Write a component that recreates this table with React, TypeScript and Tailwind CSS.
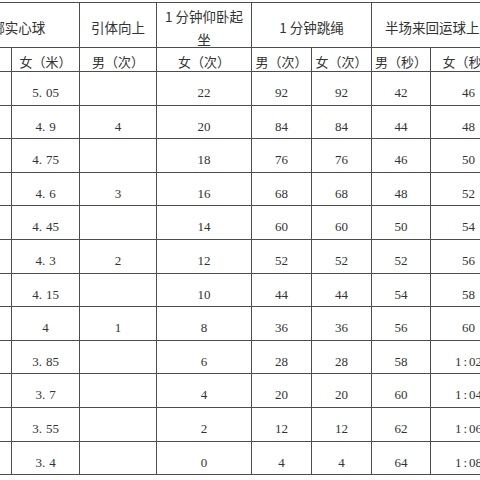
type Row = [string, string, string, string, string, string, string];

const rows: Row[] = [
  ['5.05', '', '22', '92', '92', '42', '46'],
  ['4.9', '4', '20', '84', '84', '44', '48'],
  ['4.75', '', '18', '76', '76', '46', '50'],
  ['4.6', '3', '16', '68', '68', '48', '52'],
  ['4.45', '', '14', '60', '60', '50', '54'],
  ['4.3', '2', '12', '52', '52', '52', '56'],
  ['4.15', '', '10', '44', '44', '54', '58'],
  ['4', '1', '8', '36', '36', '56', '60'],
  ['3.85', '', '6', '28', '28', '58', '1:02'],
  ['3.7', '', '4', '20', '20', '60', '1:04'],
  ['3.55', '', '2', '12', '12', '62', '1:06'],
  ['3.4', '', '0', '4', '4', '64', '1:08'],
];

const subHeads = ['男（米）', '女（米）', '男（次）', '女（次）', '男（次）', '女（次）', '男（秒）', '女（秒）'];

// SimSun-style wide punctuation in numbers
function Num({ v }: { v: string }) {
  const m = v.match(/^(\d+)([.:])(\d+)$/);
  if (!m) return <>{v}</>;
  return (
    <>
      {m[1]}
      <span className={m[2] === '.' ? 'mr-[4px]' : 'mx-[2px]'}>{m[2]}</span>
      {m[3]}
    </>
  );
}

const cell = 'flex items-center justify-center border-r border-b border-[#4d4d4d] text-[#333]';
const cjk = "font-['Noto_Sans_CJK_SC','Noto_Sans',sans-serif]";
const serif = "font-['Liberation_Serif','Noto_Sans_CJK_SC',serif]";

export default function App() {
  return (
    <div className="w-[480px] h-[480px] overflow-hidden bg-white">
      <div className="mt-[2px] -ml-[56px] w-[563px] grid grid-cols-[68px_68px_77px_95px_60px_60px_59px_76px] grid-rows-[45px_24px_repeat(12,33.6px)] border-t border-[#4d4d4d]">
        {/* header row 1 */}
        <div className={`${cell} ${cjk} col-span-2 pt-[5px] text-[13.5px]`}>投掷实心球</div>
        <div className={`${cell} ${cjk} pt-[5px] text-[13.5px]`}>引体向上</div>
        <div className={`${cell} ${cjk} pt-[5px] text-[13.5px] leading-[23px] text-center px-1`}>
          1 分钟仰卧起坐
        </div>
        <div className={`${cell} ${cjk} col-span-2 pt-[5px] text-[13.5px]`}>1 分钟跳绳</div>
        <div className={`${cell} ${cjk} col-span-2 pt-[5px] text-[13.5px] whitespace-nowrap`}>半场来回运球上篮</div>

        {/* header row 2 */}
        {subHeads.map((t, i) => (
          <div key={i} className={`${cell} ${cjk} pt-[4px] text-[13px] whitespace-nowrap`}>
            {t}
          </div>
        ))}

        {/* data rows */}
        {rows.map((r, ri) => (
          <div key={ri} className="contents">
            <div className={cell} />
            {r.map((v, ci) => (
              <div key={ci} className={`${cell} ${serif} pt-[9px] text-[13px] whitespace-nowrap`}>
                <Num v={v} />
              </div>
            ))}
          </div>
        ))}
      </div>
    </div>
  );
}
